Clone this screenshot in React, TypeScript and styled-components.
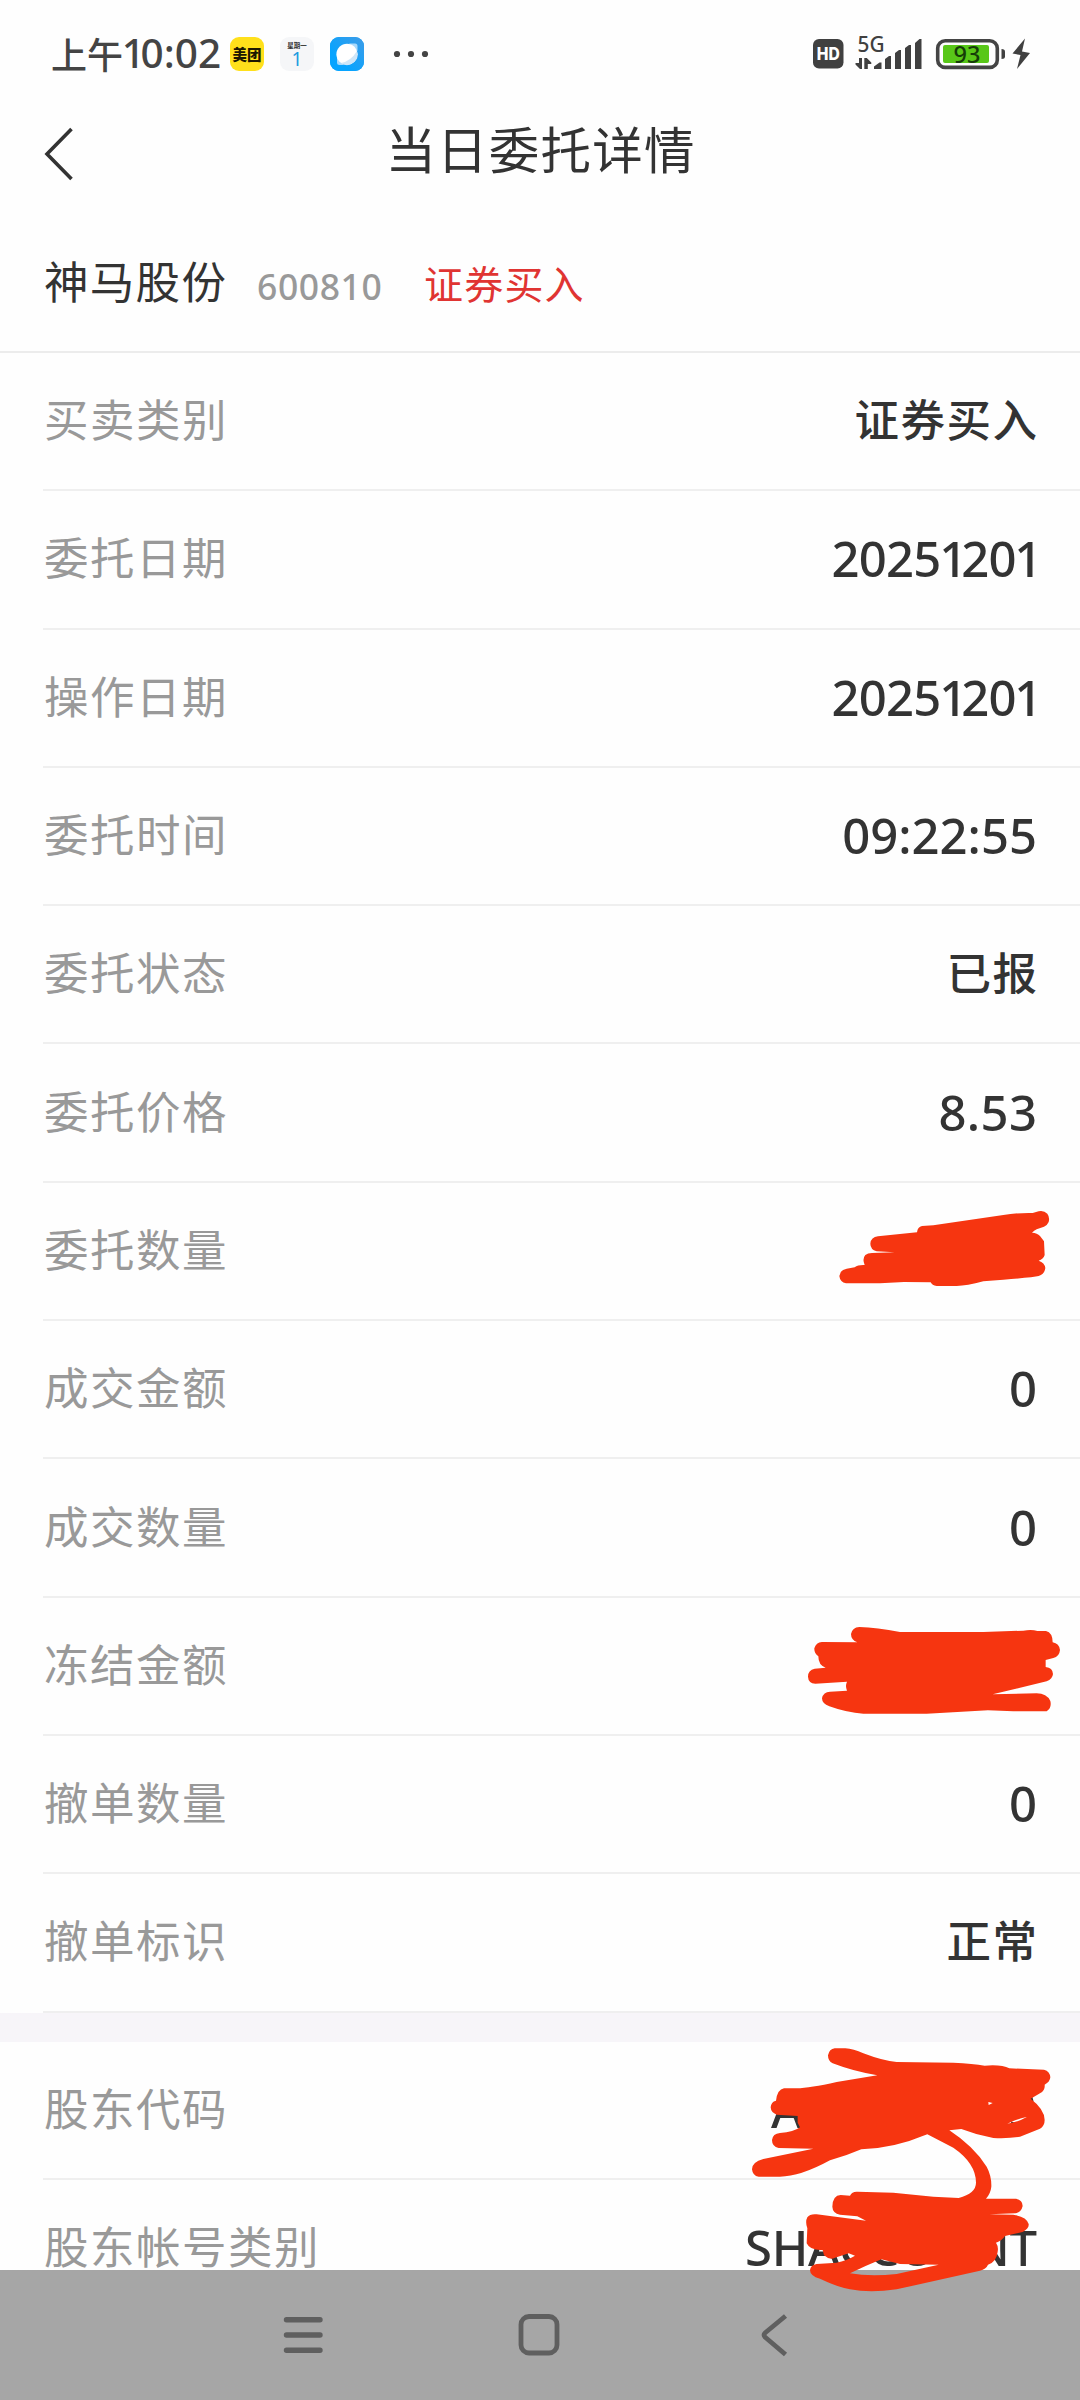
import React from "react";
import styled, { createGlobalStyle } from "styled-components";

const GlobalStyle = createGlobalStyle`
  * { box-sizing: border-box; }
  body { margin: 0; background: #fefefe; }
`;

const cjk = `"Noto Sans CJK SC", "Noto Sans", sans-serif`;
const latin = `"Noto Sans", "Noto Sans CJK SC", sans-serif`;

const Page = styled.div`
  position: relative;
  width: 1080px;
  height: 2400px;
  overflow: hidden;
  display: flex;
  flex-direction: column;
  background: #fefefe;
  color: #333;
  font-family: ${cjk};
`;

const StatusBar = styled.header`
  height: 108px;
  flex: none;
  display: flex;
  justify-content: space-between;
  align-items: center;
  padding: 0 50px 0 51px;
`;

const StatusGroup = styled.div`
  display: flex;
  align-items: center;
`;

const Clock = styled.div`
  display: flex;
  align-items: center;
  width: 179px;
  height: 48px;
  padding-bottom: 2px;
  font-size: 36px;
  line-height: 48px;
  font-weight: 500;
  color: #444;
  white-space: nowrap;
`;

const ClockDigits = styled.span`
  font-family: ${latin};
  font-size: 40.5px;
  font-weight: 500;
`;

const AppIcon = styled.div<{ $bg: string; $gap?: number }>`
  width: 34px;
  height: 34px;
  margin-right: ${(p) => p.$gap ?? 16}px;
  border-radius: 9px;
  background: ${(p) => p.$bg};
  display: flex;
  flex-direction: column;
  align-items: center;
  justify-content: center;
`;

const MeituanText = styled.span`
  font-size: 14.5px;
  font-weight: 900;
  line-height: 34px;
  color: #1c1700;
  white-space: nowrap;
`;

const WeekDay = styled.span`
  font-size: 6.5px;
  line-height: 10px;
  font-weight: 700;
  color: #333;
`;

const DayNumber = styled.span`
  font-family: ${latin};
  font-size: 19px;
  line-height: 19px;
  color: #1c9be0;
`;

const NavBar = styled.div`
  height: 90px;
  flex: none;
  display: grid;
  grid-template-columns: 100px 1fr 100px;
  align-items: center;
`;

const BackButton = styled.button`
  border: 0;
  background: none;
  padding: 2px 0 0 42px;
  display: flex;
`;

const Title = styled.h1`
  margin: 0;
  padding: 0 0 12px 1px;
  text-align: center;
  font-size: 50.5px;
  line-height: 70px;
  font-weight: 400;
  letter-spacing: 1.2px;
`;

const StockHeader = styled.section`
  height: 155px;
  flex: none;
  display: flex;
  align-items: baseline;
  padding: 49px 0 0 44px;
  border-bottom: 2px solid #ececec;
`;

const StockName = styled.span`
  width: 213px;
  font-size: 44.5px;
  line-height: 66px;
  letter-spacing: 1.3px;
`;

const StockCode = styled.span`
  position: relative;
  top: 1px;
  width: 167px;
  font-family: ${latin};
  font-size: 35.5px;
  font-weight: 500;
  letter-spacing: 0.6px;
  color: #999;
`;

const Side = styled.span`
  font-size: 39px;
  letter-spacing: 1.2px;
  color: #e03432;
`;

const List = styled.ul`
  list-style: none;
  margin: 0;
  padding: 0;
  flex: none;
`;

const Row = styled.li`
  height: 138.3px;
  margin-left: 43px;
  padding: 0 43px 0 1px;
  display: flex;
  align-items: center;
  justify-content: space-between;
  border-bottom: 2px solid #efefef;
`;

const Label = styled.span`
  padding-bottom: 6px;
  font-size: 44.5px;
  line-height: 64px;
  letter-spacing: 1.5px;
  color: #999;
`;

const Value = styled.span<{ $numeric?: boolean; $spacing?: number }>`
  padding-bottom: ${(p) => (p.$numeric ? 2 : 6)}px;
  font-family: ${(p) => (p.$numeric ? latin : cjk)};
  font-size: ${(p) => (p.$numeric ? 49 : 44.5)}px;
  line-height: 64px;
  font-weight: 500;
  letter-spacing: ${(p) => p.$spacing ?? (p.$numeric ? -0.7 : 1.5)}px;
  margin-right: ${(p) => -(p.$spacing ?? (p.$numeric ? -0.7 : 1.5))}px;
  white-space: nowrap;
`;

const MaskedValue = styled(Value)`
  width: 266px;
  display: flex;
  justify-content: space-between;
`;

const NarrowOne = styled.span`
  margin-left: -0.03em;
  margin-right: -0.11em;
`;

const SectionGap = styled.div`
  height: 29px;
  flex: none;
  background: #f7f5f9;
`;

const SystemNav = styled.nav`
  position: absolute;
  left: 0;
  right: 0;
  bottom: 0;
  height: 130px;
  background: #a6a6a6;
  display: flex;
  justify-content: space-between;
  align-items: center;
  padding: 0 284px 0 280px;
`;

const Scribbles = styled.svg`
  position: absolute;
  inset: 0;
  pointer-events: none;
`;

const StatusIconsSvg = styled.svg`
  overflow: visible;
`;

type Item = { label: string; value: string; numeric?: boolean; spacing?: number };

const orderItems: Item[] = [
  { label: "买卖类别", value: "证券买入" },
  { label: "委托日期", value: "20251201", numeric: true },
  { label: "操作日期", value: "20251201", numeric: true },
  { label: "委托时间", value: "09:22:55", numeric: true, spacing: 0 },
  { label: "委托状态", value: "已报" },
  { label: "委托价格", value: "8.53", numeric: true, spacing: 0.4 },
  { label: "委托数量", value: "" },
  { label: "成交金额", value: "0", numeric: true },
  { label: "成交数量", value: "0", numeric: true },
  { label: "冻结金额", value: "" },
  { label: "撤单数量", value: "0", numeric: true },
  { label: "撤单标识", value: "正常" },
];

/* Proportional figures: the digit one takes less room than the others. */
const Figures = ({ text }: { text: string }) => (
  <>
    {text.split(/(1)/).map((part, i) => (part === "1" ? <NarrowOne key={i}>1</NarrowOne> : part))}
  </>
);

const BrowserIcon = () => (
  <svg width="34" height="34" viewBox="0 0 34 34">
    <defs>
      <linearGradient id="sky" x1="0" y1="1" x2="1" y2="0">
        <stop offset="0.3" stopColor="#07a4ff" />
        <stop offset="1" stopColor="#3f9be6" />
      </linearGradient>
    </defs>
    <rect width="34" height="34" rx="9" fill="url(#sky)" />
    <path d="M19 6.500h6q2.500 0 2.500 2.500v5zM14 28H9.500Q7 28 7 25.500V20z" fill="#a9d9fb" />
    <circle cx="17" cy="17.300" r="10.600" fill="#fff" />
    <path d="M27 14A10.600 10.600 0 0 1 11 26.100Q21 24 27 14z" fill="#cfe6f8" />
  </svg>
);

const MoreDots = () => (
  <svg width="36" height="8" viewBox="0 0 36 8" fill="#444">
    <circle cx="4" cy="4" r="3.100" />
    <circle cx="18" cy="4" r="3.100" />
    <circle cx="32" cy="4" r="3.100" />
  </svg>
);

const SystemIcons = () => (
  <StatusIconsSvg width="220" height="40" viewBox="0 0 220 40" fill="#404040">
    <rect x="3" y="5" width="30.500" height="29.500" rx="6" />
    <text x="18.200" y="25.900" textAnchor="middle" fill="#fff" fontFamily="Inter, sans-serif" fontWeight="800" fontSize="17" textLength="23" lengthAdjust="spacingAndGlyphs">HD</text>
    <text x="47.500" y="17.800" fontFamily="Noto Sans, sans-serif" fontWeight="500" fontSize="21" textLength="27" lengthAdjust="spacingAndGlyphs">5G</text>
    <path d="M49 24h3v11h-2l-4.500-4.500v-1.500h3.500zM54.300 24h2.500l4.500 4.500v1.500h-3.500V35h-3.500z" />
    <path d="M64 35v-2.500l5.500-4h2V35zM75 35V25l4-3h2V35zM85 35V19l4-3h2V35zM95 35V14l4-3h2V35zM105 35V9l4.500-4h2V35z" />
    <rect x="127.700" y="6.800" width="59.600" height="26.600" rx="7.500" fill="none" stroke="#444" strokeWidth="3.600" />
    <rect x="133" y="11" width="46" height="18" rx="2" fill="#58c718" />
    <path d="M191.500 15q3.500 0 3.500 2.500v5q0 2.500-3.500 2.500z" />
    <text x="157" y="28.600" textAnchor="middle" fill="#153d08" fontFamily="Noto Sans, sans-serif" fontWeight="500" fontSize="23.500">93</text>
    <path d="M215 4.500L202.500 19.500l8 1.500-3.500 14 13-16-8-1.500z" />
  </StatusIconsSvg>
);

export default function App() {
  return (
    <Page>
      <GlobalStyle />
      <StatusBar>
        <StatusGroup>
          <Clock>
            上午
            <ClockDigits>
              <Figures text="10:02" />
            </ClockDigits>
          </Clock>
          <AppIcon $bg="#ffe01b">
            <MeituanText>美团</MeituanText>
          </AppIcon>
          <AppIcon $bg="#f5f6f8">
            <WeekDay>星期一</WeekDay>
            <DayNumber>1</DayNumber>
          </AppIcon>
          <AppIcon $bg="#07a4ff" $gap={29}>
            <BrowserIcon />
          </AppIcon>
          <MoreDots />
        </StatusGroup>
        <SystemIcons />
      </StatusBar>

      <NavBar>
        <BackButton aria-label="返回">
          <svg width="32" height="56" viewBox="0 0 32 56" fill="none" stroke="#333" strokeWidth="3.600">
            <path d="M29.500 3L5 28 29.500 53" />
          </svg>
        </BackButton>
        <Title>当日委托详情</Title>
      </NavBar>

      <StockHeader>
        <StockName>神马股份</StockName>
        <StockCode>600810</StockCode>
        <Side>证券买入</Side>
      </StockHeader>

      <List>
        {orderItems.map((item) => (
          <Row key={item.label}>
            <Label>{item.label}</Label>
            {item.value && (
              <Value $numeric={item.numeric} $spacing={item.spacing}>
                <Figures text={item.value} />
              </Value>
            )}
          </Row>
        ))}
      </List>
      <SectionGap />
      <List>
        <Row>
          <Label>股东代码</Label>
          <MaskedValue $numeric $spacing={0}>
            <span>A</span>
            <span>3</span>
          </MaskedValue>
        </Row>
        <Row>
          <Label>股东帐号类别</Label>
          <Value $numeric $spacing={-0.4}>SHACCOUNT</Value>
        </Row>
      </List>

      <SystemNav>
        <svg width="46" height="46" viewBox="0 0 46 46" stroke="#5f5f5f" strokeWidth="5.400" strokeLinecap="round">
          <path d="M6.500 7.700h33.500M6.500 23h33.500M6.500 38.300h33.500" />
        </svg>
        <svg width="46" height="46" viewBox="0 0 46 46" fill="none" stroke="#5f5f5f" strokeWidth="4.800">
          <rect x="6" y="4.500" width="36" height="36.500" rx="8" />
        </svg>
        <svg width="46" height="46" viewBox="0 0 46 46" fill="none" stroke="#5f5f5f" strokeWidth="4.800">
          <path d="M35.500 4L15.500 20.500q-3 2.500 0 5L35.500 42.500" />
        </svg>
      </SystemNav>

      <Scribbles width="1080" height="2400" viewBox="0 0 1080 2400" fill="#f63510">
        <g transform="translate(720 1180) scale(0.33333)">
          <path d="M380 266L404 262Q414 254 434 255Q426 236 436 225Q443 219 456 219L524 217L470 214Q451 208 451 191Q453 171 474 169L591 157Q593 140 606 138L640 136L850 105Q890 98 938 99L956 94Q972 91 982 101Q990 112 986 126Q982 136 972 140L950 148Q942 152 936 158Q952 159 960 168L972 184L974 225Q970 238 956 242Q974 248 976 264Q974 282 956 288Q940 292 850 299L790 304Q740 318 710 318H650Q636 316 632 307L552 306L480 310L378 310Q360 306 358 288Q360 269 380 266Z" />
        </g>
        <g transform="translate(780 1600) scale(0.33333)">
          <path d="M232 127Q213 120 213 102Q217 82 238 81Q290 83 360 96H610L730 92Q755 87 772 93H798Q818 98 818 127Q838 131 840 150Q838 170 820 174L797 180V201Q818 203 819 222Q818 236 800 244L638 283L770 280Q800 280 811 303Q816 324 800 334H700L624 331L440 341H250Q200 338 148 319Q126 311 126 295Q130 275 150 275L201 272Q195 258 201 245L106 251Q85 250 84 230Q84 210 104 206L137 203Q115 196 115 169Q102 160 103 145Q108 127 126 126Z" />
        </g>
        <g transform="translate(720 2020) scale(0.33333)">
          <path
            fillRule="evenodd"
            d="M472 166Q400 154 338 130Q324 124 324 106Q328 87 344 85H376Q400 86 430 100Q490 123 530 126L700 128Q760 131 794 137Q845 133 868 145L972 149Q990 154 991 172Q990 186 974 194Q976 212 960 220L932 236Q974 268 974 300Q974 318 960 326L900 350Q870 356 820 354Q770 345 724 327L688 331Q760 378 800 440Q815 468 814 500Q812 520 798 536H888Q908 540 908 558Q904 577 886 580L808 583L880 584Q920 590 926 612Q928 626 908 636L855 648Q846 662 828 668Q836 680 833 695Q830 725 804 734Q798 748 780 752L530 808Q450 820 390 808Q355 802 300 776Q270 768 270 750Q272 735 290 732L350 728Q380 722 405 707L386 700L345 713Q330 722 312 706L308 690Q270 692 260 670L262 625Q255 605 262 592Q270 581 290 583L438 602L412 589L360 584Q338 580 337 560Q338 526 362 525L390 527Q396 514 412 515L520 518L640 530L716 534Q768 520 768 488Q768 430 700 383L622 343Q520 386 424 388Q375 409 330 421Q240 470 180 470H116Q98 468 96 448Q96 426 130 417L280 386L176 384Q156 380 156 360Q158 341 180 339Q222 336 240 322L233 308V288L170 284Q153 278 152 262Q153 245 168 242Q172 208 192 205H230Q270 204 350 186ZM390 760Q450 770 530 762L656 734L540 732L484 718Q440 736 390 760ZM805 246L818 249L806 255ZM862 311Q895 306 920 291Q890 297 862 311Z"
          />
        </g>
      </Scribbles>
    </Page>
  );
}
